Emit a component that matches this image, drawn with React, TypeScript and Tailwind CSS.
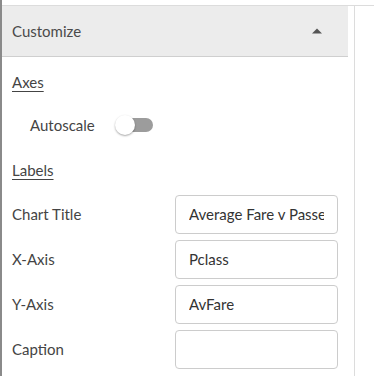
export default function App() {
  const rows = [
    { label: 'Chart Title', value: 'Average Fare v Passengers' },
    { label: 'X-Axis', value: 'Pclass' },
    { label: 'Y-Axis', value: 'AvFare' },
    { label: 'Caption', value: '' },
  ];

  return (
    <div className="h-[376px] w-[374px] overflow-hidden bg-white border-l-2 border-[#8a8a8a] pt-[5px] font-['Lato',sans-serif]">
      <div className="flex h-full border-t border-[#dcdcdc]">
        {/* Panel */}
        <div className="w-[346px] shrink-0">
          {/* Header */}
          <div className="flex h-[51px] items-center justify-between bg-[#ececec] border-b border-[#cfcfcf] pl-[10px] pr-[26px]">
            <span className="text-[15px] text-[#4a4a4a]">Customize</span>
            <svg width="10" height="6" viewBox="0 0 10 6">
              <path d="M0 5.5 L5 0.5 L10 5.5 Z" fill="#555" />
            </svg>
          </div>

          <div className="pl-[10px] pt-[14px]">
            <div className="text-[15px] text-[#444] underline underline-offset-[3px] leading-[22px]">Axes</div>

            <div className="mt-[21px] flex items-center pl-[18px]">
              <span className="text-[15px] text-[#444] leading-[22px]">Autoscale</span>
              <div className="relative ml-[20px] h-[20px] w-[38px]">
                <div className="absolute right-0 top-[3px] h-[14px] w-[32px] rounded-full bg-[#9c9c9c]" />
                <div className="absolute left-0 top-0 h-[20px] w-[20px] rounded-full bg-white shadow-[0_1px_2px_rgba(0,0,0,0.35)]" />
              </div>
            </div>

            <div className="mt-[23px] text-[15px] text-[#444] underline underline-offset-[3px] leading-[22px]">Labels</div>

            <div className="mt-[14px] flex flex-col gap-[6px]">
              {rows.map((r) => (
                <div key={r.label} className="flex items-center">
                  <span className="w-[163px] text-[15px] text-[#444]">{r.label}</span>
                  <div className="flex h-[39px] w-[163px] items-center rounded-[4px] border border-[#cccccc] px-[13px] text-[15px] text-[#333]">
                    <div className="overflow-hidden whitespace-nowrap">{r.value}</div>
                  </div>
                </div>
              ))}
            </div>
          </div>
        </div>

        {/* Right column */}
        <div className="ml-[6px] h-full border-l border-[#dcdcdc]" />
      </div>
    </div>
  );
}
